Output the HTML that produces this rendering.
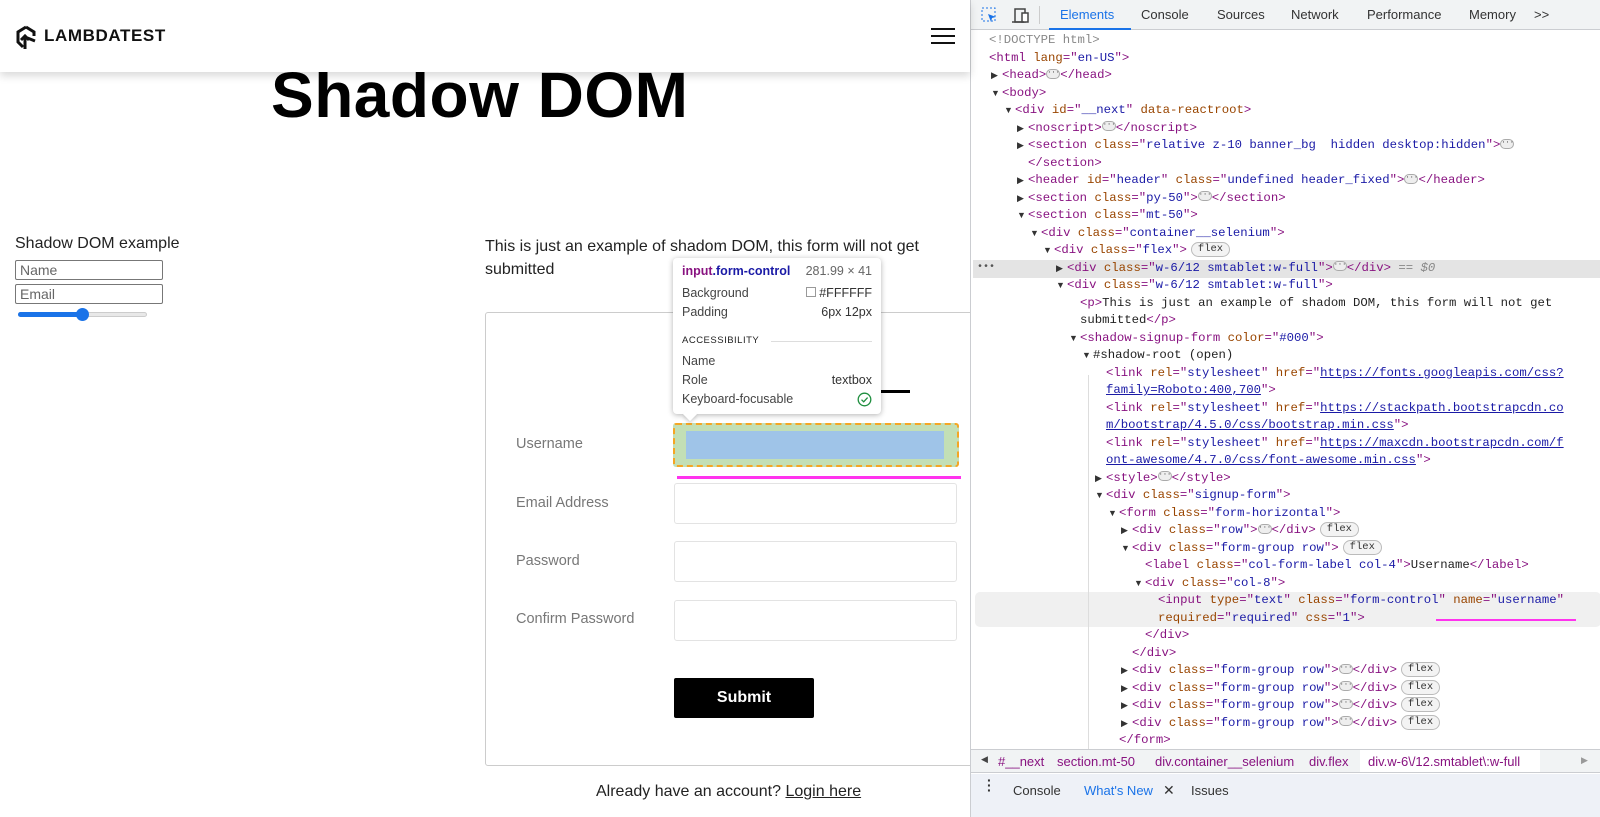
<!DOCTYPE html>
<html><head><style>
*{margin:0;padding:0;box-sizing:border-box}
body{width:1600px;height:817px;overflow:hidden;background:#fff;font-family:"Liberation Sans",sans-serif;position:relative}
.a{position:absolute}
#hdr{left:0;top:0;width:970px;height:72px;background:#fff;box-shadow:0 4px 8px rgba(0,0,0,.15);z-index:2}
.lbl{position:absolute;left:516px;font-size:14.5px;color:#777}
.inp{position:absolute;left:674px;width:283px;height:41px;border:1px solid #e3e3e3;border-radius:3px;background:#fff}
#dt{left:970px;top:0;width:630px;height:817px;background:#fff;border-left:1px solid #cbcdd1;font-family:"Liberation Mono",monospace;font-size:12.3px}
.ln{position:absolute;white-space:pre;line-height:17.5px;height:17.5px;color:#222}
.t{color:#881280}.n{color:#994500}.v{color:#1a1aa6}.u{color:#1a1aa6;text-decoration:underline}
.tri{position:absolute;font-size:9px;color:#333;font-family:"Liberation Sans",sans-serif}
.el{display:inline-block;width:14px;height:10px;border:1px solid #aaa;border-radius:5px;background:#eee;vertical-align:middle;position:relative;top:-1px;font-size:7px;line-height:6px;text-align:center;color:#333}
.fx{display:inline-block;border:1px solid #bbb;border-radius:8px;padding:0 6px;font-size:10.5px;line-height:13px;background:#f3f3f3;color:#333;vertical-align:middle;margin-left:4px}
.tab{position:absolute;top:7px;font-family:"Liberation Sans",sans-serif;font-size:13px;color:#333}
</style></head><body>

<div id="hdr" class="a">
  <svg class="a" style="left:15px;top:25px" width="24" height="25" viewBox="0 0 24 25"><path d="M11 2 L3 7 L3 17 L8 22" fill="none" stroke="#111" stroke-width="3"/><path d="M11 2 L19 7 L19 11" fill="none" stroke="#111" stroke-width="3"/><path d="M10 24 L10 12 M6 15 L10 11 L14 15 M10 12 L20 16" fill="none" stroke="#111" stroke-width="3"/></svg>
  <div class="a" style="left:44px;top:26px;font-size:17px;font-weight:bold;letter-spacing:0.6px;color:#111">LAMBDATEST</div>
  <div class="a" style="left:931px;top:28px;width:24px;height:2px;background:#111"></div>
  <div class="a" style="left:931px;top:35px;width:24px;height:2px;background:#111"></div>
  <div class="a" style="left:931px;top:42px;width:24px;height:2px;background:#111"></div>
</div>

<div class="a" style="left:271px;top:58px;font-size:64px;font-weight:bold;color:#000;letter-spacing:0.5px;z-index:1">Shadow DOM</div>

<div class="a" style="left:15px;top:235px;font-size:16px;color:#222">Shadow DOM example</div>
<div class="a" style="left:15px;top:260px;width:148px;height:20px;border:1px solid #777;border-radius:2px;font-size:14px;color:#666;padding-left:4px;line-height:18px">Name</div>
<div class="a" style="left:15px;top:284px;width:148px;height:20px;border:1px solid #777;border-radius:2px;font-size:14px;color:#666;padding-left:4px;line-height:18px">Email</div>
<div class="a" style="left:18px;top:312px;width:129px;height:5px;border-radius:3px;background:#e8e8e8;border:1px solid #ccc"></div>
<div class="a" style="left:18px;top:312px;width:65px;height:5px;border-radius:3px;background:#1a73e8"></div>
<div class="a" style="left:76px;top:308px;width:13px;height:13px;border-radius:50%;background:#1a73e8"></div>

<div class="a" style="left:485px;top:235px;font-size:16px;color:#222;line-height:23px;width:480px">This is just an example of shadom DOM, this form will not get submitted</div>

<div class="a" style="left:485px;top:312px;width:490px;height:454px;border:1px solid #ccc;border-radius:3px"></div>
<div class="a" style="left:870px;top:390px;width:40px;height:3px;background:#000"></div>
<div class="lbl" style="top:436px">Username</div>
<div class="lbl" style="top:495px">Email Address</div>
<div class="lbl" style="top:553px">Password</div>
<div class="lbl" style="top:611px">Confirm Password</div>
<div class="a" style="left:673px;top:423px;width:286px;height:44px;background:#c3dfb5;border:2px dashed #f5a623;border-radius:3px"></div>
<div class="a" style="left:686px;top:431px;width:258px;height:28px;background:#9fc4e8"></div>
<div class="a" style="left:677px;top:476px;width:284px;height:3px;background:#ff33ee"></div>
<div class="inp" style="top:483px"></div>
<div class="inp" style="top:541px"></div>
<div class="inp" style="top:600px"></div>
<div class="a" style="left:674px;top:678px;width:140px;height:40px;background:#000;border-radius:2px;color:#fff;font-weight:bold;font-size:16px;text-align:center;line-height:40px">Submit</div>
<div class="a" style="left:596px;top:783px;font-size:16px;color:#222">Already have an account? <span style="text-decoration:underline">Login here</span></div>

<!-- tooltip -->
<div class="a" style="left:673px;top:258px;width:208px;height:156px;background:#fff;border-radius:4px;box-shadow:0 1px 6px rgba(0,0,0,.3);z-index:3;font-size:12.5px;color:#444">
  <div class="a" style="left:9px;top:6px;font-weight:bold"><span style="color:#881280">input</span><span style="color:#1a1aa6">.form-control</span></div>
  <div class="a" style="right:9px;top:6px;color:#666">281.99 × 41</div>
  <div class="a" style="left:9px;top:28px">Background</div>
  <div class="a" style="right:9px;top:28px;color:#333"><span style="display:inline-block;width:10px;height:10px;border:1px solid #999;margin-right:3px"></span>#FFFFFF</div>
  <div class="a" style="left:9px;top:47px">Padding</div>
  <div class="a" style="right:9px;top:47px;color:#333">6px 12px</div>
  <div class="a" style="left:9px;top:77px;font-size:9.5px;letter-spacing:0.5px;color:#222">ACCESSIBILITY</div>
  <div class="a" style="left:98px;top:83px;width:101px;height:1px;background:#ddd"></div>
  <div class="a" style="left:9px;top:96px">Name</div>
  <div class="a" style="left:9px;top:115px">Role</div>
  <div class="a" style="right:9px;top:115px;color:#333">textbox</div>
  <div class="a" style="left:9px;top:134px">Keyboard-focusable</div>
  <svg class="a" style="right:9px;top:134px" width="15" height="15" viewBox="0 0 15 15"><circle cx="7.5" cy="7.5" r="6.3" fill="none" stroke="#1e8e3e" stroke-width="1.3"/><path d="M4.5 7.7 L6.7 9.8 L10.6 5.6" fill="none" stroke="#1e8e3e" stroke-width="1.3"/></svg>
  <div class="a" style="left:12px;top:151px;width:10px;height:10px;background:#fff;transform:rotate(45deg);box-shadow:2px 2px 3px rgba(0,0,0,.15)"></div>
</div>

<!-- devtools -->
<div id="dt" class="a">
  <div class="a" style="left:0;top:0;width:630px;height:30px;background:#f1f3f4;border-bottom:1px solid #cbcdd1"></div>
  <svg class="a" style="left:10px;top:7px" width="17" height="17" viewBox="0 0 17 17"><rect x="1" y="1" width="13" height="13" fill="none" stroke="#1a73e8" stroke-dasharray="2 2"/><path d="M7 7 L15 10 L11 11 L10 15 Z" fill="#1a73e8"/></svg>
  <svg class="a" style="left:40px;top:7px" width="19" height="17" viewBox="0 0 19 17"><rect x="4" y="2" width="10" height="13" fill="none" stroke="#444" stroke-width="1.5"/><rect x="11" y="6" width="6" height="9" fill="#fff" stroke="#444" stroke-width="1.5"/><path d="M1 15 L13 15" stroke="#444" stroke-width="1.5"/></svg>
  <div class="a" style="left:68px;top:6px;width:1px;height:18px;background:#ccc"></div>
  <div class="tab" style="left:89px;color:#1a73e8">Elements</div>
  <div class="a" style="left:78px;top:28px;width:82px;height:2px;background:#1a73e8"></div>
  <div class="tab" style="left:170px">Console</div>
  <div class="tab" style="left:246px">Sources</div>
  <div class="tab" style="left:320px">Network</div>
  <div class="tab" style="left:396px">Performance</div>
  <div class="tab" style="left:498px">Memory</div>
  <div class="tab" style="left:563px">&gt;&gt;</div>

  <div class="a" style="left:2px;top:260px;width:628px;height:17.5px;background:#e4e4e4"></div>
  <div class="a" style="left:4px;top:592px;width:626px;height:35px;background:#f0f0f0;border-radius:5px"></div>
  <div class="a" style="left:465px;top:619px;width:140px;height:2px;background:#ff33ee"></div>
  <div class="a" style="left:117px;top:375px;width:1px;height:375px;background:#ddd"></div>
  <div class="a" style="left:6px;top:262px;font-size:10px;color:#555">•••</div>

  <div id="code"></div>

  <div class="a" style="left:0;top:749px;width:630px;height:24px;background:#f1f3f4;border-top:1px solid #cbcdd1;border-bottom:1px solid #cbcdd1;font-family:'Liberation Sans',sans-serif;font-size:13px;color:#881280;white-space:nowrap">
    <span class="a" style="left:10px;top:4px;color:#444;font-size:9px">◀</span>
    <span class="a" style="left:27px;top:4px">#__next</span>
    <span class="a" style="left:86px;top:4px">section.mt-50</span>
    <span class="a" style="left:184px;top:4px">div.container__selenium</span>
    <span class="a" style="left:338px;top:4px">div.flex</span>
    <div class="a" style="left:389px;top:0;width:180px;height:22px;background:#fff"></div>
    <span class="a" style="left:397px;top:4px">div.w-6\/12.smtablet\:w-full</span>
    <span class="a" style="left:610px;top:5px;color:#999;font-size:9px">▶</span>
  </div>
  <div class="a" style="left:0;top:774px;width:630px;height:43px;background:#eef1f7;font-family:'Liberation Sans',sans-serif;font-size:13px;color:#333">
    <span class="a" style="left:16px;top:4px;font-weight:bold;font-size:14px;line-height:5px">·<br>·<br>·</span>
    <span class="a" style="left:42px;top:9px">Console</span>
    <span class="a" style="left:113px;top:9px;color:#1a73e8">What's New</span>
    <span class="a" style="left:192px;top:8px;font-size:14px">✕</span>
    <span class="a" style="left:220px;top:9px">Issues</span>
  </div>
</div>

<script>
var L=[
[0,0,'<span style="color:#888">&lt;!DOCTYPE html&gt;</span>'],
[0,0,'<span class="t">&lt;html</span> <span class="n">lang</span><span class="t">="</span><span class="v">en-US</span><span class="t">"&gt;</span>'],
[1,1,'<span class="t">&lt;head&gt;</span><span class="el">···</span><span class="t">&lt;/head&gt;</span>'],
[1,2,'<span class="t">&lt;body&gt;</span>'],
[2,2,'<span class="t">&lt;div</span> <span class="n">id</span><span class="t">="</span><span class="v">__next</span><span class="t">"</span> <span class="n">data-reactroot</span><span class="t">&gt;</span>'],
[3,1,'<span class="t">&lt;noscript&gt;</span><span class="el">···</span><span class="t">&lt;/noscript&gt;</span>'],
[3,1,'<span class="t">&lt;section</span> <span class="n">class</span><span class="t">="</span><span class="v">relative z-10 banner_bg  hidden desktop:hidden</span><span class="t">"&gt;</span><span class="el">···</span>'],
[3,0,'<span class="t">&lt;/section&gt;</span>'],
[3,1,'<span class="t">&lt;header</span> <span class="n">id</span><span class="t">="</span><span class="v">header</span><span class="t">"</span> <span class="n">class</span><span class="t">="</span><span class="v">undefined header_fixed</span><span class="t">"&gt;</span><span class="el">···</span><span class="t">&lt;/header&gt;</span>'],
[3,1,'<span class="t">&lt;section</span> <span class="n">class</span><span class="t">="</span><span class="v">py-50</span><span class="t">"&gt;</span><span class="el">···</span><span class="t">&lt;/section&gt;</span>'],
[3,2,'<span class="t">&lt;section</span> <span class="n">class</span><span class="t">="</span><span class="v">mt-50</span><span class="t">"&gt;</span>'],
[4,2,'<span class="t">&lt;div</span> <span class="n">class</span><span class="t">="</span><span class="v">container__selenium</span><span class="t">"&gt;</span>'],
[5,2,'<span class="t">&lt;div</span> <span class="n">class</span><span class="t">="</span><span class="v">flex</span><span class="t">"&gt;</span><span class="fx">flex</span>'],
[6,1,'<span class="t">&lt;div</span> <span class="n">class</span><span class="t">="</span><span class="v">w-6/12 smtablet:w-full</span><span class="t">"&gt;</span><span class="el">···</span><span class="t">&lt;/div&gt;</span> <span style="color:#888">== <i>$0</i></span>'],
[6,2,'<span class="t">&lt;div</span> <span class="n">class</span><span class="t">="</span><span class="v">w-6/12 smtablet:w-full</span><span class="t">"&gt;</span>'],
[7,0,'<span class="t">&lt;p&gt;</span>This is just an example of shadom DOM, this form will not get'],
[7,0,'submitted<span class="t">&lt;/p&gt;</span>'],
[7,2,'<span class="t">&lt;shadow-signup-form</span> <span class="n">color</span><span class="t">="</span><span class="v">#000</span><span class="t">"&gt;</span>'],
[8,2,'#shadow-root (open)'],
[9,0,'<span class="t">&lt;link</span> <span class="n">rel</span><span class="t">="</span><span class="v">stylesheet</span><span class="t">"</span> <span class="n">href</span><span class="t">="</span><span class="u">https://fonts.googleapis.com/css?</span>'],
[9,0,'<span class="u">family=Roboto:400,700</span><span class="t">"&gt;</span>'],
[9,0,'<span class="t">&lt;link</span> <span class="n">rel</span><span class="t">="</span><span class="v">stylesheet</span><span class="t">"</span> <span class="n">href</span><span class="t">="</span><span class="u">https://stackpath.bootstrapcdn.co</span>'],
[9,0,'<span class="u">m/bootstrap/4.5.0/css/bootstrap.min.css</span><span class="t">"&gt;</span>'],
[9,0,'<span class="t">&lt;link</span> <span class="n">rel</span><span class="t">="</span><span class="v">stylesheet</span><span class="t">"</span> <span class="n">href</span><span class="t">="</span><span class="u">https://maxcdn.bootstrapcdn.com/f</span>'],
[9,0,'<span class="u">ont-awesome/4.7.0/css/font-awesome.min.css</span><span class="t">"&gt;</span>'],
[9,1,'<span class="t">&lt;style&gt;</span><span class="el">···</span><span class="t">&lt;/style&gt;</span>'],
[9,2,'<span class="t">&lt;div</span> <span class="n">class</span><span class="t">="</span><span class="v">signup-form</span><span class="t">"&gt;</span>'],
[10,2,'<span class="t">&lt;form</span> <span class="n">class</span><span class="t">="</span><span class="v">form-horizontal</span><span class="t">"&gt;</span>'],
[11,1,'<span class="t">&lt;div</span> <span class="n">class</span><span class="t">="</span><span class="v">row</span><span class="t">"&gt;</span><span class="el">···</span><span class="t">&lt;/div&gt;</span><span class="fx">flex</span>'],
[11,2,'<span class="t">&lt;div</span> <span class="n">class</span><span class="t">="</span><span class="v">form-group row</span><span class="t">"&gt;</span><span class="fx">flex</span>'],
[12,0,'<span class="t">&lt;label</span> <span class="n">class</span><span class="t">="</span><span class="v">col-form-label col-4</span><span class="t">"&gt;</span>Username<span class="t">&lt;/label&gt;</span>'],
[12,2,'<span class="t">&lt;div</span> <span class="n">class</span><span class="t">="</span><span class="v">col-8</span><span class="t">"&gt;</span>'],
[13,0,'<span class="t">&lt;input</span> <span class="n">type</span><span class="t">="</span><span class="v">text</span><span class="t">"</span> <span class="n">class</span><span class="t">="</span><span class="v">form-control</span><span class="t">"</span> <span class="n">name</span><span class="t">="</span><span class="v">username</span><span class="t">"</span>'],
[13,0,'<span class="n">required</span><span class="t">="</span><span class="v">required</span><span class="t">"</span> <span class="n">css</span><span class="t">="</span><span class="v">1</span><span class="t">"&gt;</span>'],
[12,0,'<span class="t">&lt;/div&gt;</span>'],
[11,0,'<span class="t">&lt;/div&gt;</span>'],
[11,1,'<span class="t">&lt;div</span> <span class="n">class</span><span class="t">="</span><span class="v">form-group row</span><span class="t">"&gt;</span><span class="el">···</span><span class="t">&lt;/div&gt;</span><span class="fx">flex</span>'],
[11,1,'<span class="t">&lt;div</span> <span class="n">class</span><span class="t">="</span><span class="v">form-group row</span><span class="t">"&gt;</span><span class="el">···</span><span class="t">&lt;/div&gt;</span><span class="fx">flex</span>'],
[11,1,'<span class="t">&lt;div</span> <span class="n">class</span><span class="t">="</span><span class="v">form-group row</span><span class="t">"&gt;</span><span class="el">···</span><span class="t">&lt;/div&gt;</span><span class="fx">flex</span>'],
[11,1,'<span class="t">&lt;div</span> <span class="n">class</span><span class="t">="</span><span class="v">form-group row</span><span class="t">"&gt;</span><span class="el">···</span><span class="t">&lt;/div&gt;</span><span class="fx">flex</span>'],
[10,0,'<span class="t">&lt;/form&gt;</span>']
];
var h='';
for(var i=0;i<L.length;i++){
 var x=18+13*L[i][0], y=32+17.5*i;
 if(L[i][1]) h+='<span class="tri" style="left:'+(x-11)+'px;top:'+(y+3)+'px">'+(L[i][1]==1?'▶':'▼')+'</span>';
 h+='<div class="ln" style="left:'+x+'px;top:'+y+'px">'+L[i][2]+'</div>';
}
document.getElementById('code').innerHTML=h;
</script>
</body></html>
